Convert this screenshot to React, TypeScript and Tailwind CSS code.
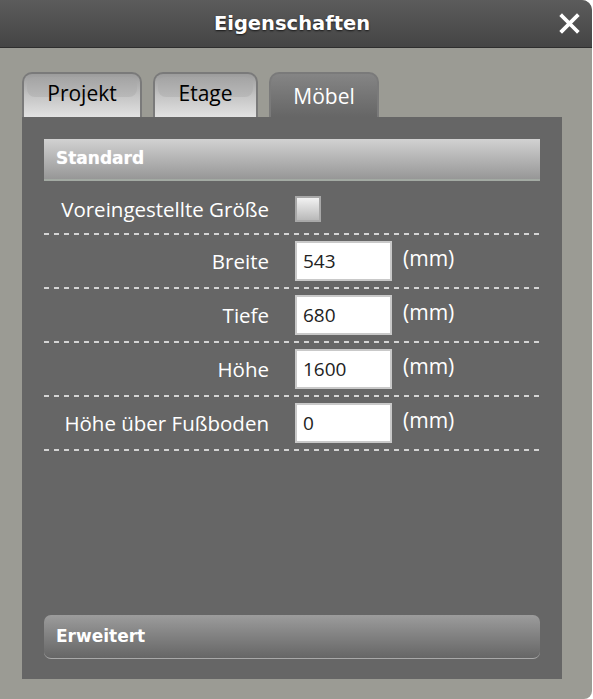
import React from 'react';

const rows = [
  { label: 'Breite', value: '543' },
  { label: 'Tiefe', value: '680' },
  { label: 'Höhe', value: '1600' },
  { label: 'Höhe über Fußboden', value: '0' },
];

function Dashed() {
  return <div className="h-[2px] w-full bg-[repeating-linear-gradient(to_right,#d4d4d4_0_5px,transparent_5px_10px)]" />;
}

function Tab({ label, active, width }: { label: string; active?: boolean; width: string }) {
  if (active) {
    return (
      <div className={`${width} h-[45px] rounded-t-[10px] border-2 border-b-0 border-[#7a7a7a] bg-gradient-to-b from-[#858585] to-[#666666] flex items-center justify-center pt-[2px] text-white text-[21px]`}>
        {label}
      </div>
    );
  }
  return (
    <div className={`${width} relative h-[45px] rounded-t-[10px] border-2 border-b-0 border-[#7a7a7a] bg-gradient-to-b from-[#9c9c9c] via-[#c4c4c4] to-[#e2e2e2] flex items-center justify-center pb-[3px] text-black text-[21px] before:absolute before:left-[3px] before:right-[3px] before:top-[3px] before:h-[20px] before:rounded-[8px] before:bg-gradient-to-b before:from-[#a4a4a4] before:to-[#b9b9b9]`}>
      <span className="relative">{label}</span>
    </div>
  );
}

export default function App() {
  return (
    <div className="w-[593px] h-[699px] bg-white font-['Open_Sans',sans-serif]">
      <div className="w-[592px] h-[699px] rounded-tr-[10px] rounded-br-[8px] bg-[#9b9b94] flex flex-col overflow-hidden">
        <header className="relative h-[48px] shrink-0 bg-gradient-to-b from-[#5c5c5c] to-[#444444] border-b border-[#2e2e2e] flex items-center justify-center">
          <h1 className="font-['DejaVu_Sans',sans-serif] font-bold text-white text-[19.5px] pr-[8px] [text-shadow:0_1px_2px_rgba(0,0,0,0.7)]">
            Eigenschaften
          </h1>
          <svg className="absolute right-[12px] top-[13px]" width="21" height="21" viewBox="0 0 21 21">
            <path d="M3 3 L18 18 M18 3 L3 18" stroke="#ffffff" strokeWidth="3.8" strokeLinecap="square" />
          </svg>
        </header>

        <div className="flex-1 flex flex-col pl-[22px] pr-[30px] pt-[24px] pb-[20px]">
          <div className="flex items-end gap-[11px]">
            <Tab label="Projekt" width="w-[120px]" />
            <Tab label="Etage" width="w-[105px]" />
            <Tab label="Möbel" width="w-[110px]" active />
          </div>

          <div className="flex-1 bg-[#666666] flex flex-col px-[22px] pt-[22px] pb-[20px]">
            <div className="h-[42px] bg-gradient-to-b from-[#d2d2d2] to-[#979797] border-b-2 border-[#a3aaa3] flex items-center px-[12px]">
              <span className="font-['DejaVu_Sans',sans-serif] font-bold text-white text-[17px] [text-shadow:0_0_1px_rgba(255,255,255,0.6)]">Standard</span>
            </div>

            <div className="h-[52px] flex items-center pt-[4px]">
              <div className="w-[225px] text-right text-white text-[20.5px] whitespace-nowrap">Voreingestellte Größe</div>
              <div className="ml-[26px] w-[26px] h-[26px] border-2 border-[#a8a8a8] bg-gradient-to-b from-[#f2f2f2] to-[#b9b9b9]" />
            </div>
            <Dashed />

            {rows.map((r) => (
              <div key={r.label}>
                <div className="h-[52px] flex items-center">
                  <div className="w-[225px] text-right text-white text-[20.5px] whitespace-nowrap">{r.label}</div>
                  <div className="ml-[26px] w-[97px] h-[40px] bg-white border-2 border-[#c9c9c9] flex items-center px-[6px] text-[19px] text-[#222222]">
                    {r.value}
                  </div>
                  <div className="ml-[11px] text-white text-[21px] -mt-[5px]">(mm)</div>
                </div>
                <Dashed />
              </div>
            ))}

            <div className="flex-1" />

            <div className="h-[44px] rounded-[7px] bg-gradient-to-b from-[#9c9c9c] to-[#666666] border-b border-[#a8a8a8] flex items-center px-[12px]">
              <span className="font-['DejaVu_Sans',sans-serif] font-bold text-white text-[17px]">Erweitert</span>
            </div>
          </div>
        </div>
      </div>
    </div>
  );
}
